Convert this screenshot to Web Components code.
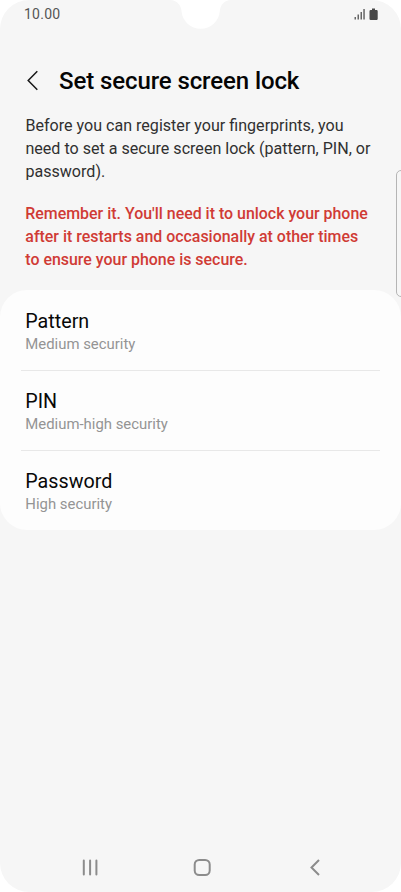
<!DOCTYPE html>
<html lang="en">
<head>
<meta charset="utf-8">
<title>Set secure screen lock</title>
<style>
html,body{margin:0;background:#fff}
body{font-family:Roboto,"Noto Sans",sans-serif}
</style>
</head>
<body>
<phone-screen>
  <status-bar slot="status">10.00</status-bar>
  <page-header>Set secure screen lock</page-header>
  <info-text>Before you can register your fingerprints, you<br>need to set a secure screen lock (pattern, PIN, or<br>password).</info-text>
  <info-text warning>Remember it. You'll need it to unlock your phone<br>after it restarts and occasionally at other times<br>to ensure your phone is secure.</info-text>
  <option-card>
    <option-row>Pattern<span slot="detail">Medium security</span></option-row>
    <option-row>PIN<span slot="detail">Medium-high security</span></option-row>
    <option-row>Password<span slot="detail">High security</span></option-row>
  </option-card>
  <edge-handle slot="overlay"></edge-handle>
  <nav-bar slot="nav"></nav-bar>
</phone-screen>
<script>
function define(name, html) {
  const template = document.createElement('template');
  template.innerHTML = html;
  customElements.define(name, class extends HTMLElement {
    constructor() {
      super();
      this.attachShadow({mode: 'open'}).append(template.content.cloneNode(true));
    }
  });
}

define('phone-screen', `
<style>
:host{display:flex;flex-direction:column;position:relative;box-sizing:border-box;width:401px;height:892px;overflow:hidden;background:#f6f6f6;border-radius:29px}
main{flex:1;display:flex;flex-direction:column}
.notch{position:absolute;left:168px;top:0;width:66px;height:31px}
</style>
<svg class="notch" viewBox="0 0 66 31"><path fill="#fff" d="M2 0C9 .5 13 5 13.500 11A19.200 19.200 0 0 0 51.800 11C52.500 5 56 .5 63 0Z"/></svg>
<slot name="status"></slot>
<main><slot></slot></main>
<slot name="nav"></slot>
<slot name="overlay"></slot>`);

define('status-bar', `
<style>
:host{display:flex;align-items:center;justify-content:space-between;box-sizing:border-box;height:28px;padding:0 22px 0 24px;font-size:14px;line-height:28px;letter-spacing:.25px;color:#555}
svg{display:block}
</style>
<slot></slot>
<svg width="26" height="14" viewBox="0 0 26 14"><g fill="#666"><rect x="1.500" y="10" width="1.500" height="2.500"/><rect x="4.500" y="7.500" width="1.500" height="5"/><rect x="7.500" y="5" width="1.500" height="7.500"/><rect x="10.300" y="2" width="1.500" height="10.500"/></g><path fill="#484848" d="M19 1.500h3V3h1.500q1.200 0 1.200 1.200v7.600q0 1.200-1.200 1.200h-5.800q-1.200 0-1.200-1.200V4.200Q16.500 3 17.700 3H19Z"/></svg>`);

define('page-header', `
<style>
:host{display:flex;align-items:center;height:52px;padding:27px 0 0 26px;font-size:24px;font-weight:500;letter-spacing:-.1px;color:#050505;white-space:nowrap}
svg{flex:none;margin-right:19px}
</style>
<svg width="14" height="22" viewBox="0 0 14 22"><path d="M11.300 1.300L2.200 10.500L11.300 19.800" fill="none" stroke="#181818" stroke-width="1.500"/></svg>
<slot></slot>`);

define('info-text', `
<style>
:host{display:block;margin:7px 0 0 25.400px;font-size:16.080px;line-height:23px;color:#303030;white-space:nowrap}
:host([warning]){margin:19px 0 0 25.300px;font-size:15.930px;color:#d03b35;font-weight:500}
</style>
<slot></slot>`);

define('option-card', `
<style>
:host{display:flex;flex-direction:column;margin-top:19px;height:240px;border-radius:27px;background:#fdfdfd}
::slotted(:not(:first-child)){--line:#e8e8e8}
</style>
<slot></slot>`);

define('option-row', `
<style>
:host{display:flex;flex-direction:column;box-sizing:border-box;height:80px;margin:0 21px;padding:19px 0 0 4.300px;box-shadow:inset 0 1px 0 0 var(--line,transparent);color:#080808;font-size:19.700px;line-height:25px}
slot[name]{display:block;font-size:14.900px;line-height:20px;color:#949494}
</style>
<div><slot></slot></div><slot name="detail"></slot>`);

define('edge-handle', `
<style>
:host{position:absolute;left:396px;top:170px;box-sizing:border-box;width:12px;height:127px;border:1px solid #b5b5b5;border-radius:5px;background:#f6f6f6}
</style>`);

define('nav-bar', `
<style>
:host{display:flex;justify-content:space-between;align-items:center;height:50px;padding:0 79px 0 80px}
svg{display:block}
path,rect{fill:none;stroke:#8c8c8c;stroke-width:2}
</style>
<svg width="20" height="20" viewBox="0 0 20 20"><path stroke-linecap="round" d="M3.800 3.500V17.500M10.100 3.500V17.500M16.400 3.500V17.500"/></svg>
<svg width="20" height="20" viewBox="0 0 20 20"><rect x="3.700" y="3" width="15" height="15" rx="4.500"/></svg>
<svg width="20" height="20" viewBox="0 0 20 20"><path d="M17 3L9.500 10.500L17 18"/></svg>`);
</script>
</body>
</html>
